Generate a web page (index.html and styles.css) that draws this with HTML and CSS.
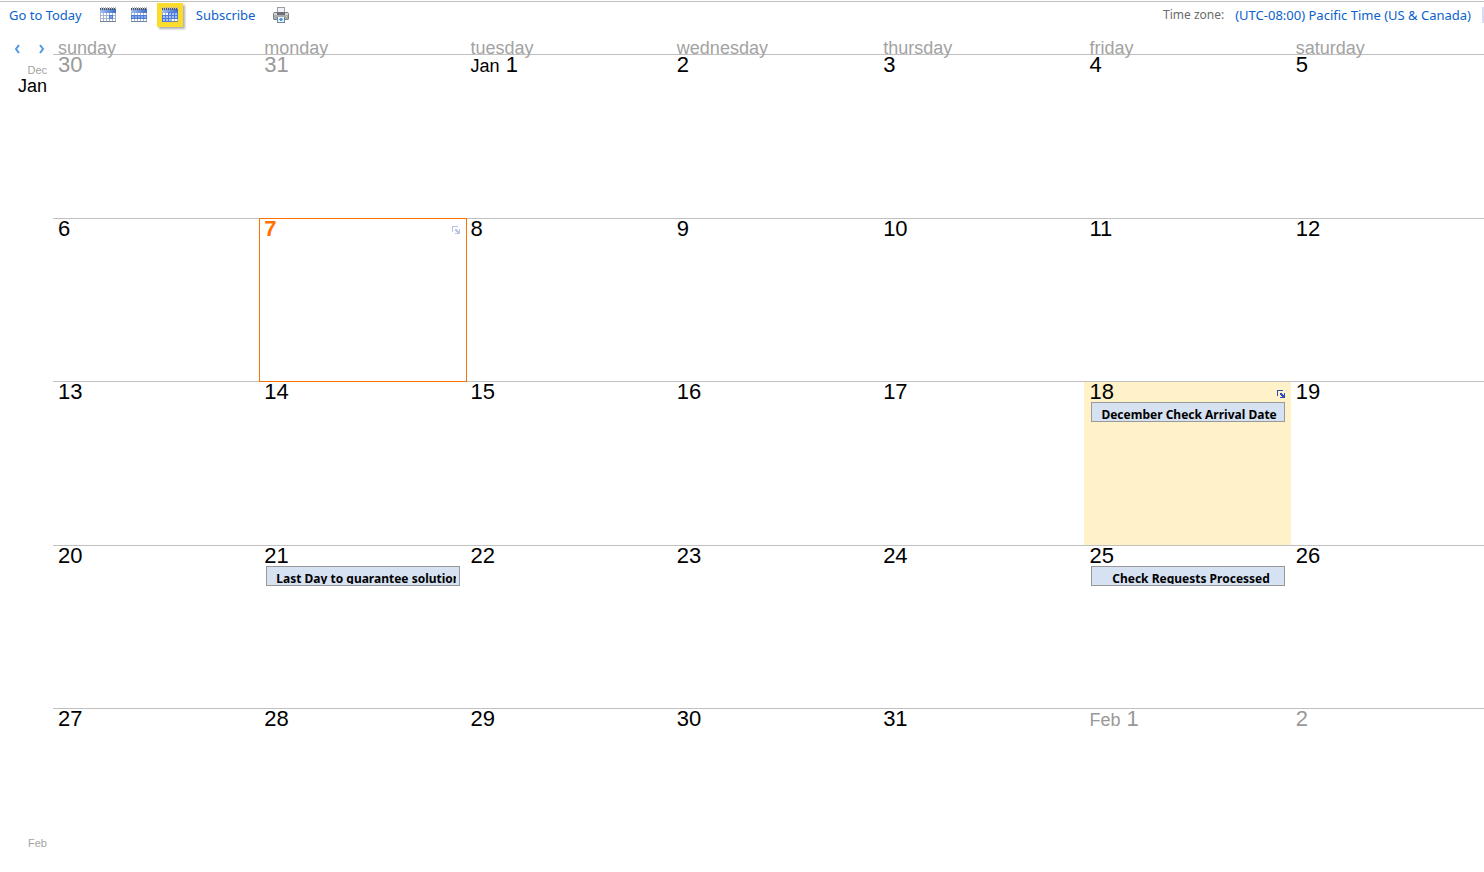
FILE: index.html
```html
<!DOCTYPE html>
<html lang="en">
<head>
    <meta charset="UTF-8">
    <meta name="viewport" content="width=device-width, initial-scale=1.0">
    <title>Calendar - January</title>
    <link rel="stylesheet" href="styles.css">
</head>
<body>
    <svg class="icon-defs" aria-hidden="true">
        <defs>
            <linearGradient id="cal-blue" x1="0" y1="0" x2="1" y2="0">
                <stop offset="0" stop-color="#a3bff2"/>
                <stop offset="1" stop-color="#3f6cc9"/>
            </linearGradient>
            <symbol id="cal-base" viewBox="0 0 16 16">
                <path d="M0 2h16v12H0z" fill="#a9b5cc"/>
                <path d="M0 14h16v1H0z" fill="#75839c"/>
                <path d="M0 2h16v4H0z" fill="url(#cal-blue)"/>
                <path d="M1 6h2v2H1zM4 6h2v2H4zM7 6h2v2H7zM10 6h2v2h-2zM13 6h2v2h-2zM1 9h2v2H1zM4 9h2v2H4zM7 9h2v2H7zM10 9h2v2h-2zM13 9h2v2h-2zM1 12h2v2H1zM4 12h2v2H4zM7 12h2v2H7zM10 12h2v2h-2zM13 12h2v2h-2z" fill="#fff"/>
                <path d="M0 1h1v2H0zM2 1h1v2H2zM4 1h1v2H4zM6 1h1v2H6zM8 1h1v2H8zM10 1h1v2h-1zM12 1h1v2h-1zM14 1h1v2h-1z" fill="#4d5563"/>
                <path d="M1 0h1v2H1zM3 0h1v2H3zM5 0h1v2H5zM7 0h1v2H7zM9 0h1v2H9zM11 0h1v2h-1zM13 0h1v2h-1zM15 0h1v2h-1z" fill="#b4b9c2"/>
            </symbol>
            <symbol id="popout" viewBox="0 0 8 8">
                <path d="M0 6V0h6v1H1v5zM3 3h2v1h1v1h1V3h1v5H3V7h2V6H4V5H3z"/>
            </symbol>
        </defs>
    </svg>

    <header class="toolbar">
        <a href="#today">Go to Today</a>
        <div class="views">
            <button class="view-button" type="button" aria-label="Day">
                <svg width="16" height="16" viewBox="0 0 16 16">
                    <use href="#cal-base"/>
                    <path d="M9 8h4v4H9z" fill="#4f7cd6"/>
                    <path d="M10 9h2v2h-2z" fill="#86a9ee"/>
                </svg>
            </button>
            <button class="view-button" type="button" aria-label="Week">
                <svg width="16" height="16" viewBox="0 0 16 16">
                    <use href="#cal-base"/>
                    <path d="M0 8h16v4H0z" fill="#4f7cd6"/>
                    <path d="M1 9h2v2H1zM4 9h2v2H4zM7 9h2v2H7zM10 9h2v2h-2zM13 9h2v2h-2z" fill="#86a9ee"/>
                </svg>
            </button>
            <button class="view-button selected" type="button" aria-label="Month">
                <svg width="16" height="16" viewBox="0 0 16 16">
                    <use href="#cal-base"/>
                    <path d="M6 5h10v7H9v3H0V8h6z" fill="#4f7cd6"/>
                    <path d="M7 6h2v2H7zM10 6h2v2h-2zM13 6h2v2h-2zM1 9h2v2H1zM4 9h2v2H4zM7 9h2v2H7zM10 9h2v2h-2zM13 9h2v2h-2zM1 12h2v2H1zM4 12h2v2H4zM7 12h2v2H7z" fill="#a5c0f5"/>
                </svg>
            </button>
        </div>
        <a href="#subscribe">Subscribe</a>
        <button class="print-button" type="button" aria-label="Print">
            <svg width="16" height="16" viewBox="0 0 16 16">
                <path d="M4 0h8v6H4z" fill="#9a9fa7"/>
                <path d="M5 1h6v5H5z" fill="#f0f3f7"/>
                <path d="M1 5h14l1 2v5l-1 1H1l-1-1V7z" fill="#7b7e83"/>
                <path d="M1 6h14v2H1z" fill="#d3d5d8"/>
                <path d="M1 8h14v4H1z" fill="#a9acb1"/>
                <path d="M4 5h8v3H4z" fill="#6b6f76"/>
                <path d="M13 9h1v1h-1z" fill="#d9e24a"/>
                <path d="M4 10h8v6H4z" fill="#71879d"/>
                <path d="M5 10h6v5H5z" fill="#e4f3fd"/>
                <path d="M7 11h2v1h1v1H9v1H7v-1H6v-1h1z" fill="#4f9bd8"/>
            </svg>
        </button>
        <div class="timezone">
            <span class="timezone-label">Time zone:</span>
            <a href="#timezone">(UTC-08:00) Pacific Time (US &amp; Canada)</a>
            <span class="toolbar-end"></span>
        </div>
    </header>

    <main class="calendar">
        <aside class="month-strip">
            <div class="month-nav">
                <button class="nav-button" type="button" aria-label="Previous month">
                    <svg width="7" height="10" viewBox="0 0 7 10"><path d="M5 1L2 5l3 4"/></svg>
                </button>
                <button class="nav-button" type="button" aria-label="Next month">
                    <svg width="7" height="10" viewBox="0 0 7 10"><path d="M2 1l3 4-3 4"/></svg>
                </button>
            </div>
            <a class="other-month" href="#dec">Dec</a>
            <a class="current-month" href="#jan">Jan</a>
            <a class="other-month next-month" href="#feb">Feb</a>
        </aside>
        <div class="month">
            <table class="month-table">
                <thead>
                    <tr>
                        <th><div class="day-name">sunday</div></th>
                        <th><div class="day-name">monday</div></th>
                        <th><div class="day-name">tuesday</div></th>
                        <th><div class="day-name">wednesday</div></th>
                        <th><div class="day-name">thursday</div></th>
                        <th><div class="day-name">friday</div></th>
                        <th><div class="day-name">saturday</div></th>
                    </tr>
                </thead>
                <tbody>
                    <tr>
                        <td class="outside"><div class="date">30</div></td>
                        <td class="outside"><div class="date">31</div></td>
                        <td><div class="date"><span><small>Jan</small> 1</span></div></td>
                        <td><div class="date">2</div></td>
                        <td><div class="date">3</div></td>
                        <td><div class="date">4</div></td>
                        <td><div class="date">5</div></td>
                    </tr>
                    <tr>
                        <td><div class="date">6</div></td>
                        <td class="selected-day">
                            <div class="date">7 <svg class="popout" width="8" height="8"><use href="#popout"/></svg></div>
                        </td>
                        <td><div class="date">8</div></td>
                        <td><div class="date">9</div></td>
                        <td><div class="date">10</div></td>
                        <td><div class="date">11</div></td>
                        <td><div class="date">12</div></td>
                    </tr>
                    <tr>
                        <td><div class="date">13</div></td>
                        <td><div class="date">14</div></td>
                        <td><div class="date">15</div></td>
                        <td><div class="date">16</div></td>
                        <td><div class="date">17</div></td>
                        <td class="hover-day">
                            <div class="date">18 <svg class="popout" width="8" height="8"><use href="#popout"/></svg></div>
                            <a class="event" href="#event-1"><span class="event-title">December Check Arrival Date</span></a>
                        </td>
                        <td><div class="date">19</div></td>
                    </tr>
                    <tr>
                        <td><div class="date">20</div></td>
                        <td>
                            <div class="date">21</div>
                            <a class="event" href="#event-2"><span class="event-title">Last Day to guarantee solutions</span></a>
                        </td>
                        <td><div class="date">22</div></td>
                        <td><div class="date">23</div></td>
                        <td><div class="date">24</div></td>
                        <td>
                            <div class="date">25</div>
                            <a class="event centered" href="#event-3"><span class="event-title">Check Requests Processed</span></a>
                        </td>
                        <td><div class="date">26</div></td>
                    </tr>
                    <tr>
                        <td><div class="date">27</div></td>
                        <td><div class="date">28</div></td>
                        <td><div class="date">29</div></td>
                        <td><div class="date">30</div></td>
                        <td><div class="date">31</div></td>
                        <td class="outside"><div class="date"><span><small>Feb</small> 1</span></div></td>
                        <td class="outside"><div class="date">2</div></td>
                    </tr>
                </tbody>
            </table>
        </div>
    </main>
</body>
</html>
```
FILE: styles.css
```css
* {
    margin: 0;
    padding: 0;
    box-sizing: border-box;
}

body {
    display: flex;
    flex-direction: column;
    height: 100vh;
    padding-top: 1px;
    overflow: hidden;
    background-color: #fff;
    font-family: "Noto Sans", "Open Sans", sans-serif;
    font-size: 13px;
}

a {
    color: #0b62cb;
    text-decoration: none;
}

button {
    border: none;
    background: none;
    cursor: pointer;
}

svg {
    display: block;
}

.icon-defs {
    position: absolute;
    width: 0;
    height: 0;
}

/* Toolbar */
.toolbar {
    display: flex;
    align-items: center;
    height: 37px;
    padding: 0 0 11px 9px;
    border-top: 1px solid #c0c0c0;
}

.views {
    display: flex;
    gap: 5px;
    margin: 0 13px;
}

.view-button {
    padding: 4px 5px;
}

.view-button.selected {
    background-color: #fbdb2b;
    box-shadow: 2px 2px 2px #b0b0b0;
}

.print-button {
    margin-left: 18px;
}

.timezone {
    display: flex;
    align-items: center;
    gap: 11px;
    margin-left: auto;
}

.timezone-label {
    color: #6b6b6b;
    font-size: 12px;
}

.toolbar-end {
    width: 2px;
    height: 16px;
    background-color: #d9dcf8;
}

/* Calendar */
.calendar {
    display: flex;
    flex: 1;
    min-height: 0;
    font-family: "Liberation Sans", Arial, sans-serif;
}

.month-strip {
    display: flex;
    flex-direction: column;
    flex: none;
    width: 53px;
    padding: 6px 6px 21px 14px;
    text-align: right;
}

.month-nav {
    display: flex;
    justify-content: space-between;
    padding-right: 2px;
    margin-bottom: 8px;
}

.nav-button path {
    fill: none;
    stroke: #4f97e0;
    stroke-width: 2;
}

.other-month {
    color: #a3a3a3;
    font-size: 11px;
    line-height: 16px;
}

.current-month {
    color: #000;
    font-size: 18px;
    line-height: 16px;
}

.next-month {
    margin-top: auto;
}

.month {
    flex: 1;
    min-width: 0;
    overflow: hidden;
}

/* The last column runs past the right edge */
.month-table {
    width: calc(100% + 13px);
    height: 100%;
    table-layout: fixed;
    border-collapse: separate;
    border-spacing: 0;
}

.month-table th {
    height: 16px;
    font-weight: normal;
    text-align: left;
    vertical-align: top;
}

.day-name {
    position: relative;
    z-index: 1;
    height: 16px;
    padding-left: 5px;
    color: #a3a3a3;
    font-size: 18px;
    line-height: 20px;
}

.month-table td {
    height: 20%;
    border-top: 1px solid #c0c0c0;
    vertical-align: top;
}

.date {
    display: flex;
    align-items: center;
    justify-content: space-between;
    height: 20px;
    padding: 0 6px 0 5px;
    font-size: 22px;
    line-height: 20px;
}

.date small {
    font-size: 18px;
}

.outside .date {
    color: #999;
}

.selected-day {
    position: relative;
}

/* Frame that also covers the grid lines around the cell */
.selected-day::after {
    content: "";
    position: absolute;
    inset: -1px -1px -1px 0;
    border: 1px solid #ff7200;
    pointer-events: none;
}

.selected-day .date {
    color: #ff7200;
    font-weight: bold;
}

.popout {
    margin-top: 3px;
    fill: #2b4bbd;
}

.selected-day .popout {
    fill: #b9c3e6;
}

.hover-day {
    background-color: #fff1c8;
}

.event {
    display: block;
    height: 20px;
    margin: 0 6px 0 7px;
    padding: 3px 3px 1px 9px;
    border: 1px solid #999;
    background-color: #d6e1f2;
    color: #000;
    font: bold 12px/18px "Noto Sans", "Open Sans", sans-serif;
}

.event-title {
    display: block;
    height: 14px;
    overflow: hidden;
    white-space: nowrap;
}

.centered {
    text-align: center;
}
```
